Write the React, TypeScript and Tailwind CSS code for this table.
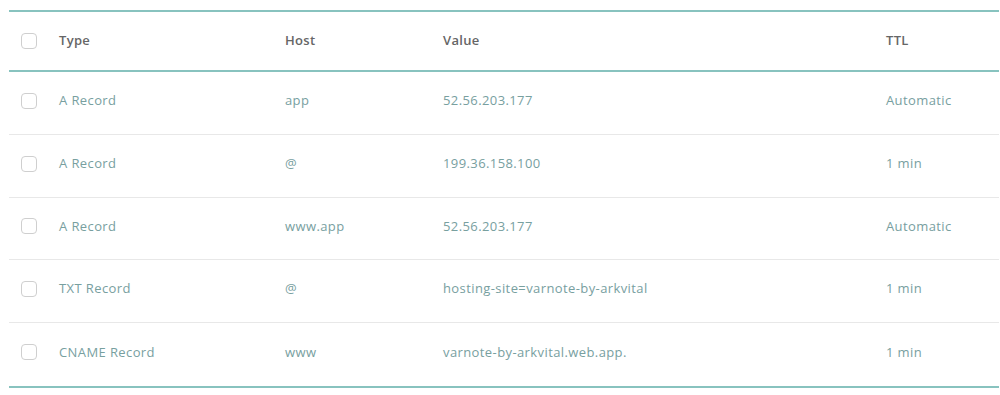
import React from "react";

const rows = [
  { type: "A Record", host: "app", value: "52.56.203.177", ttl: "Automatic" },
  { type: "A Record", host: "@", value: "199.36.158.100", ttl: "1 min" },
  { type: "A Record", host: "www.app", value: "52.56.203.177", ttl: "Automatic" },
  { type: "TXT Record", host: "@", value: "hosting-site=varnote-by-arkvital", ttl: "1 min" },
  { type: "CNAME Record", host: "www", value: "varnote-by-arkvital.web.app.", ttl: "1 min" },
];

function Box() {
  return <div className="w-4 h-4 rounded-[4px] border border-[#cfcfcf] bg-white" />;
}

export default function App() {
  return (
    <div className="bg-white w-[1000px] h-[395px] pt-[10px] pl-[9px] pr-px" style={{ fontFamily: '"Open Sans", "Noto Sans", sans-serif' }}>
      <div className="border-t-2 border-b-2 border-[#88c3bf]">
        <div className="grid grid-cols-[50px_226px_158px_443px_1fr] items-center h-[60px] border-b-2 border-[#88c3bf] text-[13px] font-semibold text-[#666666] tracking-[0.3px]">
          <div className="pl-3"><Box /></div>
          <div>Type</div>
          <div>Host</div>
          <div>Value</div>
          <div>TTL</div>
        </div>
        {rows.map((r, i) => (
          <div
            key={i}
            className={`grid grid-cols-[50px_226px_158px_443px_1fr] items-center h-[62.75px] pb-1 text-[13px] text-[#78a09f] tracking-[0.4px] ${i < rows.length - 1 ? "border-b border-[#e8e8e8]" : ""}`}
          >
            <div className="pl-3"><Box /></div>
            <div>{r.type}</div>
            <div>{r.host}</div>
            <div>{r.value}</div>
            <div>{r.ttl}</div>
          </div>
        ))}
      </div>
    </div>
  );
}
